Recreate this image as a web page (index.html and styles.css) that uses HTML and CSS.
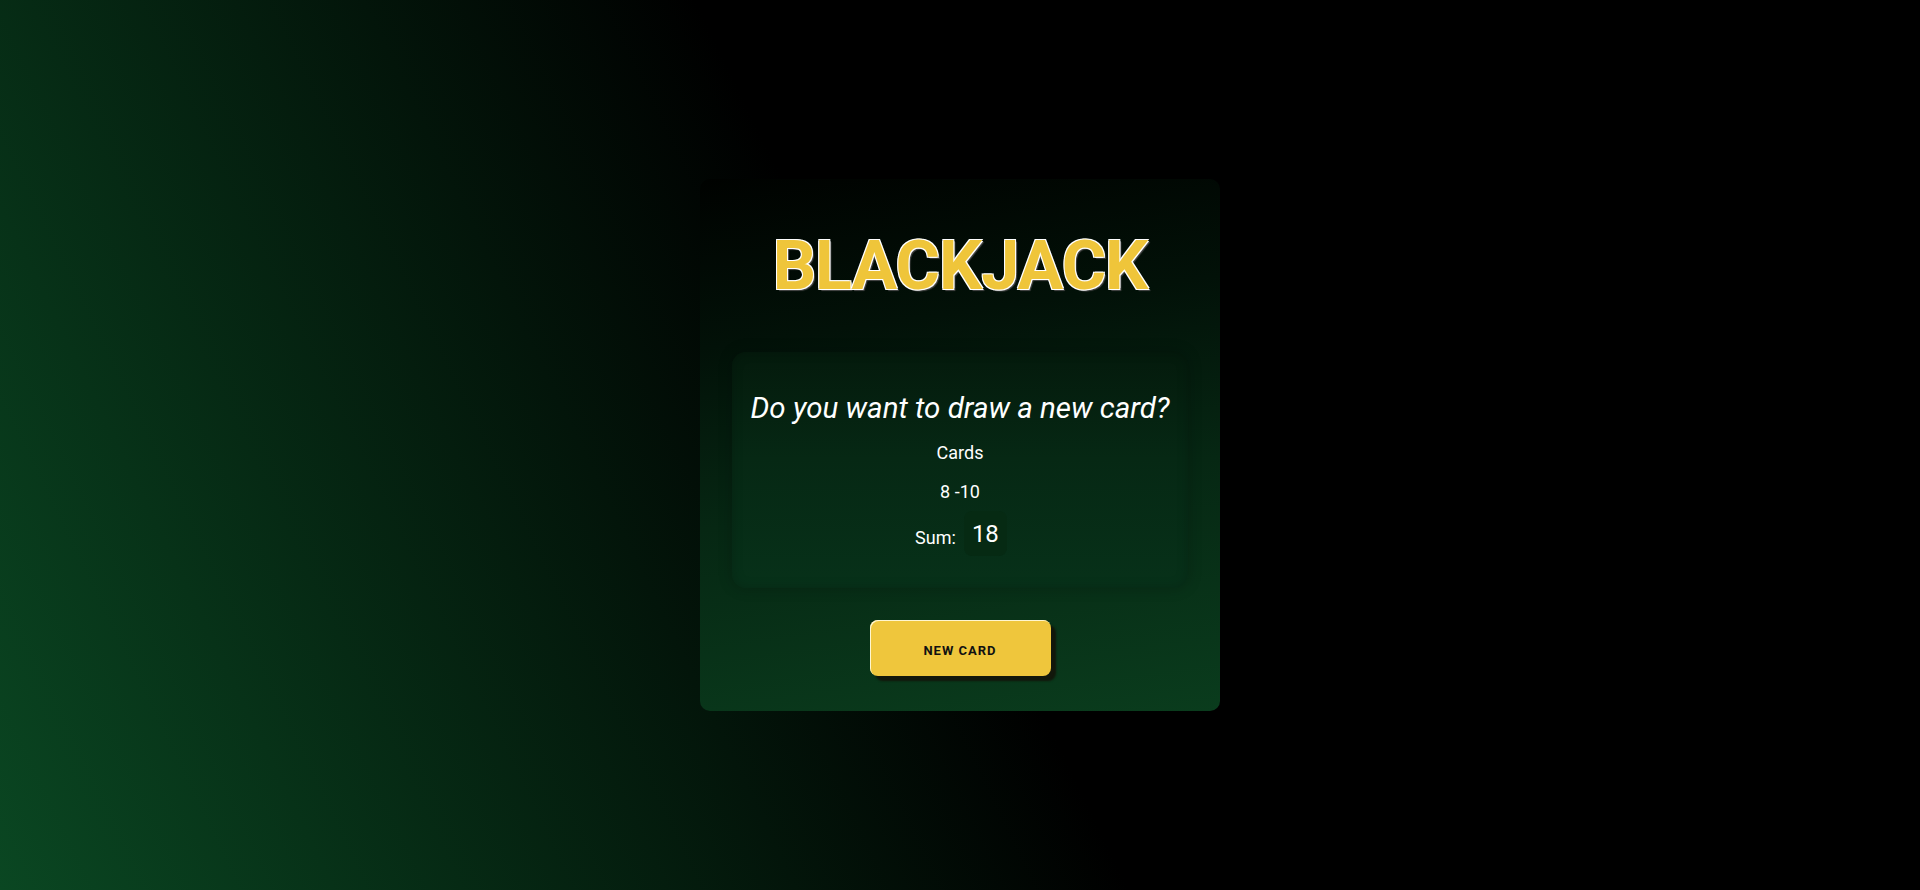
FILE: index.html
```html
<!DOCTYPE html>
<html lang="en">
<head>
<meta charset="utf-8">
<title>Blackjack</title>
<link rel="stylesheet" href="styles.css">
</head>
<body>
  <main class="card">
    <h1 class="title">BLACKJACK</h1>
    <section class="panel">
      <p class="question">Do you want to draw a new card?</p>
      <p class="cards">Cards</p>
      <p class="range">8 -10</p>
      <div class="sum-row">
        <span class="sum-label">Sum:</span>
        <span class="sum-value">18</span>
      </div>
    </section>
    <button class="btn">NEW CARD</button>
  </main>
</body>
</html>
```

FILE: styles.css
```css
* { box-sizing: border-box; }

html, body { height: 100%; }

body {
  margin: 0;
  min-height: 100vh;
  display: flex;
  align-items: center;
  justify-content: center;
  font-family: Roboto, "Liberation Sans", sans-serif;
  color: #ffffff;
  background: linear-gradient(64deg, #0a4722 0%, #000000 48%, #000000 100%);
}

.card {
  width: 520px;
  height: 532px;
  padding: 45px 32px 35px;
  border-radius: 10px;
  background: linear-gradient(172deg, #000200 0%, #021108 28%, #062713 58%, #0a3c1d 100%);
  display: flex;
  flex-direction: column;
  align-items: center;
}

.title {
  margin: 0 0 44px;
  height: 84px;
  font-size: 68px;
  line-height: 84px;
  font-weight: 700;
  color: #efc53a;
  letter-spacing: -1px;
  text-shadow: -1px -1px 0 #ffffff, 1px 1px 0 #ffffff, -1px 1px 0 #ffffff, 1px -1px 0 #ffffff, 2px 2px 1px #4a4a4a;
}

.panel {
  width: 456px;
  height: 236px;
  padding: 39px 0 32px;
  border-radius: 14px;
  background: linear-gradient(180deg, #041a0c 0%, #062814 45%, #073119 100%);
  box-shadow: inset 0 0 12px rgba(0, 0, 0, 0.18), 0 0 14px 1px rgba(0, 0, 0, 0.18);
  display: flex;
  flex-direction: column;
  align-items: center;
}

.question {
  margin: 0 0 17px;
  font-size: 29.5px;
  line-height: 34px;
  font-style: italic;
}

.cards,
.range {
  margin: 0 0 18px;
  font-size: 18px;
  line-height: 21px;
}

.range { margin-bottom: 9px; }

.sum-row {
  display: flex;
  align-items: center;
  gap: 8px;
  height: 45px;
  font-size: 18px;
  padding-left: 2px;
}

.sum-label { line-height: 21px; padding-top: 8px; }

.sum-value {
  width: 43px;
  height: 45px;
  border-radius: 8px;
  background: #062a13;
  font-size: 24px;
  display: flex;
  align-items: center;
  justify-content: center;
}

.btn {
  margin-top: 32px;
  width: 181px;
  height: 56px;
  padding: 4px 0 0;
  border: none;
  border-radius: 8px;
  background: #efc63c;
  color: #111111;
  font-family: Roboto, "Liberation Sans", sans-serif;
  font-size: 13px;
  font-weight: 700;
  letter-spacing: 1px;
  box-shadow: inset 1px 1px 0 #fff6cf, 5px 5px 2px #12170b;
  cursor: pointer;
}
```
